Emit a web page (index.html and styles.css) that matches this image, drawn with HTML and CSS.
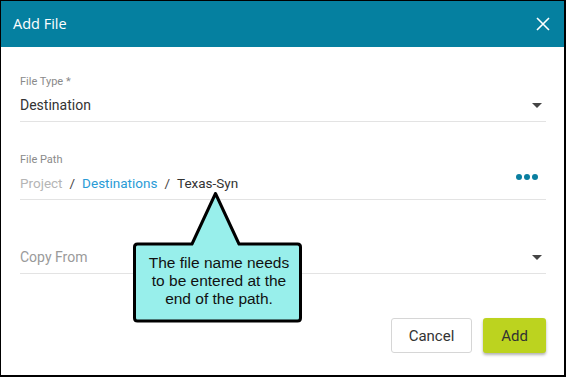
FILE: index.html
```html
<!DOCTYPE html>
<html lang="en">
<head>
    <meta charset="UTF-8">
    <title>Add File</title>
    <link rel="stylesheet" href="styles.css">
</head>
<body>
    <div class="dialog">
        <div class="dialog-header">
            <span class="dialog-title">Add File</span>
            <svg class="close-icon" width="14" height="14" viewBox="0 0 14 14">
                <path d="M1 1 L13 13 M13 1 L1 13" stroke="#fff" stroke-width="1.6" fill="none"/>
            </svg>
        </div>

        <div class="dialog-body">
            <div class="field field-type">
                <div class="field-label">File Type *</div>
                <div class="field-row">
                    <span class="field-value">Destination</span>
                    <span class="caret"></span>
                </div>
            </div>

            <div class="field field-path">
                <div class="field-label">File Path</div>
                <div class="field-row">
                    <span class="path"><span class="path-root">Project</span><span class="path-sep">/</span><span class="path-link">Destinations</span><span class="path-sep">/</span><span class="path-current">Texas-Syn</span></span>
                    <span class="more-dots"><i></i><i></i><i></i></span>
                </div>
            </div>

            <div class="field field-copy">
                <div class="field-row">
                    <span class="field-placeholder">Copy From</span>
                    <span class="caret"></span>
                </div>
            </div>

            <div class="dialog-actions">
                <button class="btn btn-cancel">Cancel</button>
                <button class="btn btn-add">Add</button>
            </div>
        </div>

        <div class="callout">
            <svg class="callout-shape" width="172" height="134" viewBox="0 0 172 134">
                <path d="M4.5 52 L59 52 L82.5 1.5 L106 52 L164.5 52 Q167.5 52 167.5 55 L167.5 126 Q167.5 129 164.5 129 L4.5 129 Q1.5 129 1.5 126 L1.5 55 Q1.5 52 4.5 52 Z"
                      fill="#98efeb" stroke="#000" stroke-width="3" stroke-linejoin="round"/>
            </svg>
            <div class="callout-text">The file name needs to be entered at the end of the path.</div>
        </div>
    </div>
</body>
</html>
```

FILE: styles.css
```css
body {
    margin: 0;
    font-family: Roboto, "Noto Sans", sans-serif;
    background: #fff;
}

.dialog {
    position: relative;
    width: 566px;
    height: 377px;
    box-sizing: border-box;
    border: 1px solid #000;
    border-right-width: 2px;
    border-bottom-width: 2px;
    background: #fff;
}

.dialog-header {
    height: 46px;
    background: #0580a0;
    padding: 0 14px 0 12px;
    display: flex;
    align-items: center;
    justify-content: space-between;
}
.dialog-title {
    color: #fff;
    font-family: "Open Sans", Roboto, sans-serif;
    font-size: 14.5px;
    margin-top: -2px;
}
.close-icon {
    display: block;
    margin-top: -1px;
}

.dialog-body {
    padding: 28px 18px 0 19px;
}

.field {
    border-bottom: 1px solid #e3e3e3;
    padding-bottom: 6px;
}
.field-path {
    margin-top: 31px;
}
.field-copy {
    margin-top: 47px;
}

.field-label {
    font-size: 11px;
    line-height: 14px;
    color: #8a8a8a;
    margin-bottom: 6px;
}
.field-row {
    display: flex;
    align-items: center;
    justify-content: space-between;
    height: 20px;
    font-size: 14px;
}
.field-value {
    color: #333;
}
.field-placeholder {
    color: #9a9a9a;
}
.caret {
    width: 0;
    height: 0;
    border-left: 5px solid transparent;
    border-right: 5px solid transparent;
    border-top: 5px solid #444;
    margin-right: 4px;
}

.path {
    font-size: 13.5px;
}
.path-root {
    color: #b5b5b5;
}
.path-sep {
    color: #444;
    margin: 0 7px;
}
.path-link {
    color: #2a9bd6;
}
.path-current {
    color: #333;
}
.more-dots {
    display: flex;
    gap: 2px;
    margin-right: 8px;
    margin-top: -13px;
}
.more-dots i {
    width: 6px;
    height: 6px;
    border-radius: 50%;
    background: #0a7fa0;
}

.dialog-actions {
    display: flex;
    justify-content: flex-end;
    gap: 11px;
    margin-top: 44px;
}
.btn {
    height: 35px;
    border-radius: 3px;
    font-family: Roboto, sans-serif;
    font-size: 15px;
    color: #333;
    cursor: pointer;
}
.btn-cancel {
    width: 81px;
    background: #fff;
    border: 1px solid #d6d6d6;
}
.btn-add {
    width: 63px;
    background: #bcd31f;
    border: none;
    box-shadow: 0 2px 3px rgba(0, 0, 0, 0.3);
}

/* callout bubble over the form */
.callout {
    position: absolute;
    left: 132px;
    top: 191px;
    width: 172px;
    height: 134px;
}
.callout-shape {
    display: block;
}
.callout-text {
    position: absolute;
    left: 11px;
    right: 11px;
    top: 62px;
    font-family: "Liberation Sans", Arial, sans-serif;
    font-size: 15.5px;
    line-height: 18px;
    text-align: center;
    color: #111;
}
```
